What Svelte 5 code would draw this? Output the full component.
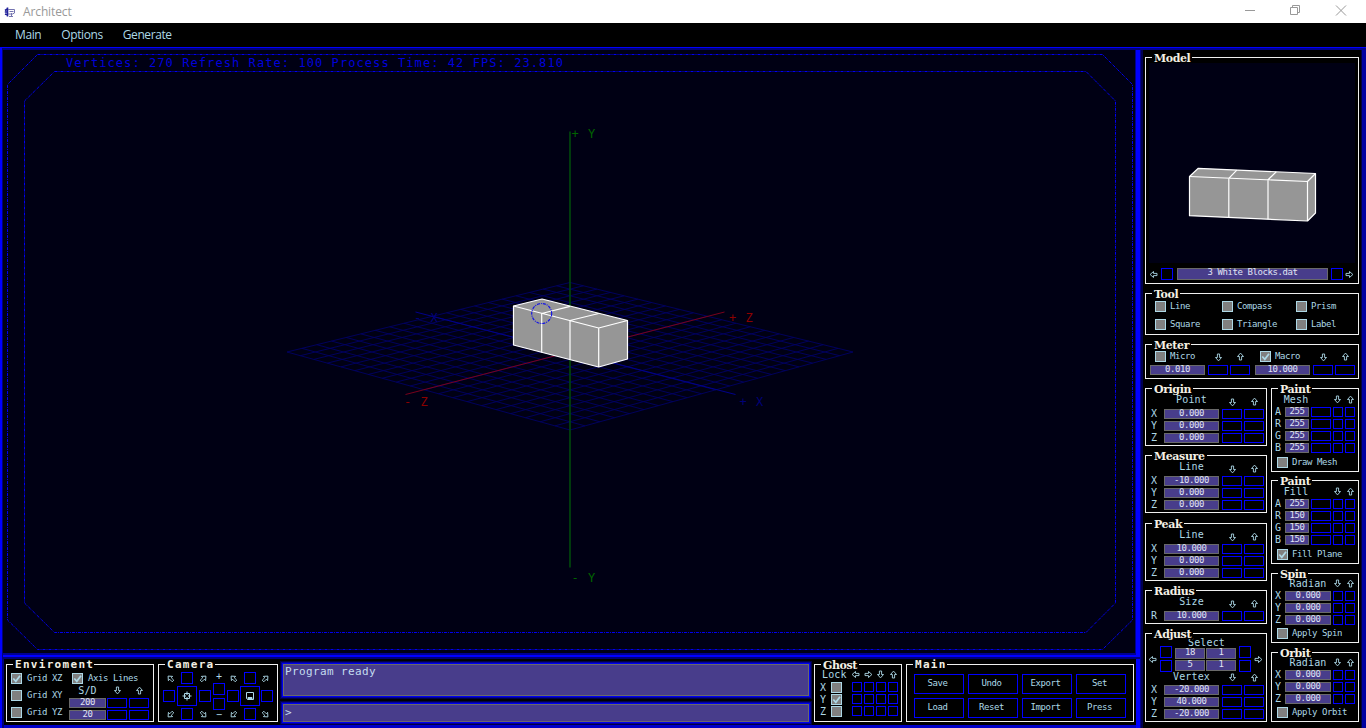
<script>
  // Perspective projection of the ground plane; a and b run from -1 to 1.
  function project(a, b) {
    const s = (a + b) / 2;
    const t = (a - b) / 2;
    const w = 1 - 0.0576 * s;
    return [570 + (283 * t) / w, 352 + (73.5 * s) / w];
  }
  const gridLines = [];
  for (let i = 0; i <= 20; i++) {
    const v = -1 + i / 10;
    gridLines.push([...project(v, -1), ...project(v, 1)]);
    gridLines.push([...project(-1, v), ...project(1, v)]);
  }

  const turns = { down: 0, left: 90, up: 180, right: 270, sw: 45, nw: 135, ne: 225, se: 315 };
  const tools = ['Line', 'Compass', 'Prism', 'Square', 'Triangle', 'Label'];
  const vectors = [
    { title: 'Origin', head: 'Point', rows: [['X', '0.000'], ['Y', '0.000'], ['Z', '0.000']] },
    { title: 'Measure', head: 'Line', rows: [['X', '-10.000'], ['Y', '0.000'], ['Z', '0.000']] },
    { title: 'Peak', head: 'Line', rows: [['X', '10.000'], ['Y', '0.000'], ['Z', '0.000']] },
    { title: 'Radius', head: 'Size', rows: [['R', '10.000']] }
  ];
  const vertex = [['X', '-20.000'], ['Y', '40.000'], ['Z', '-20.000']];
  const paints = [
    { title: 'Paint', head: 'Mesh', check: 'Draw Mesh', on: false, rows: [['A', '255'], ['R', '255'], ['G', '255'], ['B', '255']] },
    { title: 'Paint', head: 'Fill', check: 'Fill Plane', on: true, rows: [['A', '255'], ['R', '150'], ['G', '150'], ['B', '150']] }
  ];
  const turnsets = [
    { title: 'Spin', check: 'Apply Spin' },
    { title: 'Orbit', check: 'Apply Orbit' }
  ];
  const actions = ['Save', 'Undo', 'Export', 'Set', 'Load', 'Reset', 'Import', 'Press'];
</script>

{#snippet arrow(dir)}
  <svg class="arrow {dir}" viewBox="0 0 9 9"><path d="M3.400 1h2.200v3.500h1.900L4.500 7.900 1.500 4.500h1.900z" transform="rotate({turns[dir]} 4.500 4.500)" /></svg>
{/snippet}

{#snippet box(on)}
  <span class="check">{#if on}<svg viewBox="0 0 11 11"><path d="M2.300 5.500l2.500 2.800 4.200-5.600" /></svg>{/if}</span>
{/snippet}

{#snippet choice(label, on)}
  <label class="choice">{@render box(on)}<span>{label}</span></label>
{/snippet}

{#snippet vectorRow(row)}
  <div class="row"><b>{row[0]}</b><i class="field">{row[1]}</i><i class="slot wide"></i><i class="slot wide"></i></div>
{/snippet}

{#snippet camera(icon)}
  <div class="pad">
    {@render arrow('nw')}<i class="slot sq"></i>{@render arrow('ne')}
    <i class="slot sq"></i>
    <i class="slot hub">
      {#if icon === 'target'}
        <svg viewBox="0 0 10 10"><path d="M2.500 2.500h5v5h-5zM5 .5v3.500M5 6v3.500M.5 5H4M6 5h3.500" /></svg>
      {:else}
        <svg viewBox="0 0 10 10"><path d="M1.500 1.500h7v7h-6l-1-1z" /><path d="M3 6.500h4v2H3z" fill="#add8e6" /></svg>
      {/if}
    </i>
    <i class="slot sq"></i>
    {@render arrow('sw')}<i class="slot sq"></i>{@render arrow('se')}
  </div>
{/snippet}

<div class="app">
  <header class="titlebar">
    <svg class="logo" width="12" height="12" viewBox="0 0 12 12">
      <path d="M3.500 1.500v9M1 4.500l3-2M.8 6h3M1 8l3 1" stroke="#20209a" stroke-width="1.600" fill="none" />
      <path d="M4 3.500h6.500v3.500L8.500 8H4M5.500 5.500h4M5 10.500h4M7.500 7v3" stroke="#7474b0" fill="none" />
    </svg>
    <span class="name">Architect</span>
    <svg class="winbtns" width="110" height="22" viewBox="0 0 110 22">
      <path d="M5 10.500h10M50.500 7.500h7v7h-7zM52.500 7.500v-2h7v7h-2M96 5.500l10 10M106 5.500l-10 10" />
    </svg>
  </header>
  <nav><span>Main</span><span>Options</span><span>Generate</span></nav>

  <div class="body">
    <div class="left">
      <svg class="scene" viewBox="0 47 1140 610" width="1140" height="610">
        <g class="dash">
          <path d="M37.500 54.500H1102.500L1132.500 84.500V620L1102.500 649.500H37.500L7.500 620V84.500z" />
          <path d="M54.500 71.500H1086L1115.500 101V603L1086 632.500H54.500L24.500 603V101z" />
        </g>
        <g stroke="#000064" stroke-width="0.900">
          {#each gridLines as [x1, y1, x2, y2]}<line {x1} {y1} {x2} {y2} />{/each}
        </g>
        <path d="M415.500 312L735.500 394.500" stroke="#00008b" />
        <path d="M724.500 312L405.500 394.500" stroke="#78001c" />
        <path d="M570 131.500V567.500" stroke="#004a0c" stroke-width="1.600" />
        <g class="mono">
          <text x="66" y="67" fill="#0000dc" textLength="498">Vertices: 270 Refresh Rate: 100 Process Time: 42 FPS: 23.810</text>
          <text x="571.500" y="138" fill="#006400">+ Y</text>
          <text x="571.500" y="582" fill="#006400">- Y</text>
          <text x="729" y="322" fill="#8b0000">+ Z</text>
          <text x="404" y="406" fill="#8b0000">- Z</text>
          <text x="414" y="322" fill="#000078">- X</text>
          <text x="739.500" y="406" fill="#000078">+ X</text>
        </g>
        <g class="solid">
          <path d="M513.500 306L542 299 627.500 320.500V359L598.700 367 513.500 345z" />
          <path d="M513.500 306L598.700 328 627.500 320.500M598.700 328V367M541.700 313.500V352.500M570 320.500V359.500M541.700 313.500L570 306.300M570 320.500L598.700 313.500" />
        </g>
        <circle cx="541.700" cy="313.500" r="10" fill="none" stroke="#1414e6" stroke-width="1.200" stroke-dasharray="3 1 1 1" />
      </svg>

      <footer class="dock">
        <section class="group env">
          <h3 class="wideTitle">Enviroment</h3>
          <div class="stack">
            {@render choice('Grid XZ', true)}
            {@render choice('Grid XY', false)}
            {@render choice('Grid YZ', false)}
          </div>
          <div class="envRight">
            {@render choice('Axis Lines', true)}
            <div class="sdHead"><em>S/D</em>{@render arrow('down')}{@render arrow('up')}</div>
            <div class="row"><i class="field">200</i><i class="slot wide"></i><i class="slot wide"></i></div>
            <div class="row"><i class="field">20</i><i class="slot wide"></i><i class="slot wide"></i></div>
          </div>
        </section>

        <section class="group cam">
          <h3 class="wideTitle">Camera</h3>
          {@render camera('target')}
          <div class="zoomer"><em>+</em><i class="slot sq"></i><i class="slot sq"></i><em>−</em></div>
          {@render camera('disk')}
        </section>

        <div class="console">
          <div class="msg">Program ready</div>
          <div class="msg prompt">&gt;</div>
        </div>

        <section class="group ghost">
          <h3>Ghost</h3>
          <div class="ghostHead"><em>Lock</em>{@render arrow('left')}{@render arrow('right')}{@render arrow('down')}{@render arrow('up')}</div>
          {#each ['X', 'Y', 'Z'] as axis}
            <div class="ghostRow"><b>{axis}</b>{@render box(axis === 'Y')}<i class="slot sm"></i><i class="slot sm"></i><i class="slot sm"></i><i class="slot sm"></i></div>
          {/each}
        </section>

        <section class="group actions">
          <h3 class="wideTitle">Main</h3>
          {#each actions as a}<button>{a}</button>{/each}
        </section>
      </footer>
    </div>

    <aside>
      <section class="group model">
        <h3>Model</h3>
        <svg width="206" height="200" viewBox="1149 63 206 200">
          <g class="solid">
            <path d="M1189.500 176.500L1198.300 168.300 1315.500 173.500V213L1307.500 221 1189.500 215.700z" />
            <path d="M1189.500 176.500L1307.500 181.500 1315.500 173.500M1307.500 181.500V221M1228.800 178.300V217.500M1268 179.800V219.200M1228.800 178.300L1236.800 170.200M1268 179.800L1276.300 171.800" />
          </g>
        </svg>
        <div class="picker">{@render arrow('left')}<i class="slot sq"></i><i class="field">3 White Blocks.dat</i><i class="slot sq"></i>{@render arrow('right')}</div>
      </section>

      <section class="group tool">
        <h3>Tool</h3>
        {#each tools as t}{@render choice(t, false)}{/each}
      </section>

      <section class="group meter">
        <h3>Meter</h3>
        {#each [['Micro', '0.010', false], ['Macro', '10.000', true]] as [name, value, on]}
          <div>
            <div class="meterHead">{@render choice(name, on)}{@render arrow('down')}{@render arrow('up')}</div>
            <div class="row"><i class="field">{value}</i><i class="slot wide"></i><i class="slot wide"></i></div>
          </div>
        {/each}
      </section>

      <div class="cols">
        <div class="col first">
          {#each vectors as g}
            <section class="group vec">
              <h3>{g.title}</h3>
              <div class="head"><em>{g.head}</em>{@render arrow('down')}{@render arrow('up')}</div>
              {#each g.rows as r}{@render vectorRow(r)}{/each}
            </section>
          {/each}
          <section class="group vec adjust">
            <h3>Adjust</h3>
            <em class="sel">Select</em>
            <div class="selector">
              {@render arrow('left')}
              <div class="pair"><i class="slot sq"></i><i class="slot sq"></i></div>
              <div class="quad"><i class="field">18</i><i class="field">1</i><i class="field">5</i><i class="field">1</i></div>
              <div class="pair"><i class="slot sq"></i><i class="slot sq"></i></div>
              {@render arrow('right')}
            </div>
            <div class="head"><em>Vertex</em>{@render arrow('down')}{@render arrow('up')}</div>
            {#each vertex as r}{@render vectorRow(r)}{/each}
          </section>
        </div>

        <div class="col second">
          {#each paints as g}
            <section class="group paint">
              <h3>{g.title}</h3>
              <div class="head"><em>{g.head}</em>{@render arrow('down')}{@render arrow('up')}</div>
              {#each g.rows as r}
                <div class="row"><b>{r[0]}</b><i class="field">{r[1]}</i><i class="slot wide"></i><i class="slot sm"></i><i class="slot sm"></i></div>
              {/each}
              {@render choice(g.check, g.on)}
            </section>
          {/each}
          {#each turnsets as g}
            <section class="group paint spin">
              <h3>{g.title}</h3>
              <div class="head"><em>Radian</em>{@render arrow('down')}{@render arrow('up')}</div>
              {#each ['X', 'Y', 'Z'] as axis}
                <div class="row"><b>{axis}</b><i class="field">0.000</i><i class="slot sm"></i><i class="slot sm"></i></div>
              {/each}
              {@render choice(g.check, false)}
            </section>
          {/each}
        </div>
      </div>
    </aside>
  </div>
</div>

<style>
  :global(body) { background: #000; overflow: hidden; }
  .app { width: 1366px; height: 728px; background: #000; color: #add8e6; font: 9px/10px "DejaVu Sans Mono", monospace; letter-spacing: -0.42px; display: flex; flex-direction: column; }
  .app * { box-sizing: border-box; }
  i, em { font-style: normal; }
  b { font-weight: normal; }

  .titlebar { height: 23px; background: #fff; display: flex; align-items: center; padding-left: 4px; font: 12px/22px "Open Sans", sans-serif; letter-spacing: -0.12px; color: #999; }
  .name { margin-left: 7px; }
  .winbtns { margin-left: auto; margin-right: 16px; margin-bottom: 1px; fill: none; stroke: #999; }
  nav { height: 24px; display: flex; padding-left: 15px; gap: 20px; font: 12px/24px "Open Sans", sans-serif; letter-spacing: -0.400px; }

  .body { flex: 1; display: flex; }
  .left { width: 1140px; display: flex; flex-direction: column; }
  .scene { display: block; background: #000014; box-shadow: inset 2px 1px #00f, inset 3px 3px #000078, inset -4px -2px #00f, inset -5px -4px #000090; }
  .dash path { fill: none; stroke: #0000f0; stroke-dasharray: 3 1 1 1; }
  .mono { font: 12px "DejaVu Sans Mono", monospace; letter-spacing: 1.080px; white-space: pre; }
  .solid path { fill: #969696; stroke: #fff; stroke-width: 1.200; stroke-linejoin: round; }
  .solid path + path { fill: none; }

  .dock { height: 71px; padding: 7px 6px 6px; display: flex; gap: 4px; box-shadow: inset 2px 0 #00f, inset 4px 2px #000078, inset -4px 0 #00f, inset 0 -3px #0000c8; }
  aside { width: 226px; padding: 10px 7px 6px 5px; display: flex; flex-direction: column; box-shadow: inset 0 1px #00f, inset 1px 3px #000090, inset 3px 0 #000050, inset -4px -3px #0000a0, inset -5px 0 #000040; }

  .group { position: relative; border: 1px solid #f0f0f0; flex: none; }
  h3 { position: absolute; left: 6px; top: -5px; margin: 0; padding: 0 2px; height: 10px; background: #000; color: #f4f0e4; font: bold 11px/11px "DejaVu Serif", serif; letter-spacing: -0.400px; }
  h3.wideTitle { font: bold 11px/9px "DejaVu Sans Mono", monospace; letter-spacing: 1.300px; height: 9px; top: -5px; padding: 0 0 0 2px; }

  .arrow { width: 9px; height: 9px; flex: none; fill: none; stroke: #add8e6; stroke-width: 0.900; display: block; }
  .check { width: 11px; height: 11px; flex: none; background: #808080; border: 1px solid #add8e6; display: block; }
  .check svg { display: block; width: 11px; height: 11px; margin: -1px; fill: none; stroke: #add8e6; stroke-width: 1.700; }
  .choice { display: flex; height: 11px; gap: 4px; line-height: 10px; white-space: nowrap; }
  .field { display: block; flex: none; height: 10px; background: #483d8b; border: 1px solid #696969; color: #e0e4f4; text-align: center; line-height: 7px; }
  .slot { display: block; flex: none; border: 1px solid #00f; height: 10px; }
  .wide { width: 20px; }
  .sm { width: 10px; }
  .sq { width: 12px; height: 12px; }
  .row { display: flex; height: 10px; }
  .row .slot + .slot { margin-left: 2px; }
  b, em { font-size: 10px; letter-spacing: 0.150px; }

  .model { height: 227px; padding: 5px 3px 0; }
  .model > svg { display: block; background: #000014; }
  .picker { display: flex; margin-top: 5px; height: 12px; align-items: center; }
  .picker .field { width: 151px; height: 12px; margin: 0 3px 0 4px; }
  .picker .slot:first-of-type { margin-left: 3px; }
  .picker .arrow:last-child { margin-left: 2px; }
  .tool { margin-top: 9px; height: 42px; padding: 7px 0 0 9px; display: grid; grid-template-columns: 67px 74px 60px; grid-auto-rows: 18px; }
  .meter { margin-top: 9px; height: 35px; padding: 6px 0 0 4px; display: flex; gap: 5px; }
  .meter .row { margin-top: 3px; }
  .meter .field { width: 55px; margin-right: 3px; }
  .meterHead { display: flex; padding-left: 5px; height: 11px; }
  .meterHead .choice { width: 59px; }
  .meterHead .arrow { margin: 2px 13px 0 0; }
  .meterHead .arrow.up { margin: 1px 0 0; }

  .cols { margin-top: 9px; display: flex; gap: 4px; }
  .col { display: flex; flex-direction: column; }
  .first { width: 122px; }
  .second { width: 88px; }
  .vec { padding: 6px 0 2px 1px; margin-bottom: 9px; height: 58px; }
  .vec:nth-child(2) { margin-bottom: 10px; }
  .vec:nth-child(4) { height: 34px; }
  .vec .head { display: flex; height: 14px; }
  .vec .head em { width: 55px; margin-left: 17px; text-align: center; line-height: 10px; }
  .vec .head .arrow { margin: 3px 0 0 9px; }
  .vec .head .arrow + .arrow { margin: 2px 0 0 13px; }
  .vec .row + .row { margin-top: 2px; }
  .vec .row b { width: 17px; padding-left: 4px; line-height: 10px; }
  .vec .row .field { width: 55px; margin-right: 3px; }
  .vec.adjust { height: 89px; margin: 0; padding-top: 4px; }
  .sel { display: block; height: 8px; text-align: center; line-height: 10px; }
  .selector { display: flex; height: 26px; align-items: center; }
  .selector .arrow { margin: 0 3px 0 1px; }
  .selector .arrow:last-child { margin: 0 0 0 3px; }
  .pair { display: grid; gap: 2px; }
  .quad { display: grid; grid-template-columns: 30px 30px; gap: 1px; margin: 0 3px; }
  .quad .field { height: 11px; }
  .adjust .head { height: 13px; }
  .adjust .head em { line-height: 10px; }
  .adjust .head .arrow, .adjust .head .arrow + .arrow { margin-top: 1px; }

  .paint { height: 84px; padding-top: 5px; margin-bottom: 8px; }
  .paint:nth-child(2) { margin-bottom: 9px; }
  .paint .head { display: flex; height: 13px; }
  .paint .head em { width: 48px; text-align: center; line-height: 11px; }
  .paint .head .arrow { margin: 1px 0 0 13px; }
  .paint .head .arrow + .arrow { margin-left: 4px; }
  .paint .row { margin-bottom: 2px; }
  .paint .row b { width: 13px; padding-left: 3px; line-height: 10px; }
  .paint .row .field { width: 24px; margin-right: 2px; }
  .paint .choice { margin: 4px 0 0 5px; }
  .spin { height: 70px; padding-top: 4px; margin-bottom: 9px; }
  .spin .head em { width: 61px; padding-left: 11px; }
  .spin .head .arrow:first-of-type { margin-left: 0; }
  .spin .row .field { width: 46px; }
  .spin .choice { margin-top: 3px; }

  .env { width: 148px; display: flex; padding: 8px 0 0 4px; }
  .env .choice { gap: 5px; }
  .stack { width: 58px; display: grid; grid-auto-rows: 17px; }
  .envRight .choice { margin-left: 3px; }
  .envRight .row { margin-top: 2px; }
  .envRight .field { width: 37px; margin-right: 1px; }
  .sdHead { display: flex; height: 12px; }
  .sdHead em { width: 37px; text-align: center; line-height: 13px; }
  .sdHead .arrow { margin: 2px 0 0 7px; }
  .sdHead .arrow + .arrow { margin-left: 13px; }

  .cam { width: 120px; padding: 7px 0 0 4px; display: flex; gap: 2px; }
  .pad { display: grid; grid-template: 12px 20px 12px / 12px 20px 12px; gap: 2px; place-items: center; height: 48px; }
  .pad:last-child { column-gap: 1px; }
  .pad .ne, .pad .se { justify-self: start; }
  .pad:not(:last-child) .nw, .pad:not(:last-child) .sw { justify-self: end; }
  .hub { width: 20px; height: 20px; display: grid; place-items: center; }
  .hub svg { width: 10px; height: 10px; fill: none; stroke: #add8e6; }
  .zoomer { width: 12px; display: grid; grid-template-rows: 11px 15px 12px 10px; text-align: center; }
  .zoomer em { line-height: 10px; }

  .console { width: 528px; margin: -1px 0; padding: 1px 0; display: flex; flex-direction: column; gap: 8px; }
  .msg { height: 32px; margin-left: 1px; margin-right: 1px; border: 1px solid #696969; background: #483d8b; box-shadow: 0 0 0 1px #0000f0, 0 0 0 2px #000096, 0 0 0 3px #000046; padding: 1px 1px; color: #c4dcf0; font-size: 11px; line-height: 11px; letter-spacing: 0.380px; }
  .prompt { height: 18px; padding-top: 2px; }

  .ghost { width: 88px; padding: 5px 0 0 5px; margin-left: 0; }
  .ghostHead { display: flex; height: 12px; }
  .ghostHead em { width: 26px; margin-left: 2px; margin-right: 3px; line-height: 10px; }
  .ghostHead .arrow { margin: 0 3.500px 0 0; }
  .ghostRow { display: flex; height: 12px; }
  .ghostRow b { width: 11px; line-height: 11px; }
  .ghostRow .check { margin-right: 10px; }
  .ghostRow .slot + .slot { margin-left: 2px; }

  .actions { width: 228px; padding: 9px 0 0 7px; display: grid; grid-template-columns: repeat(4, 50px); grid-auto-rows: 20px; gap: 4px; align-content: start; }
  .actions button { border: 1px solid #00f; background: #000; color: #add8e6; font: inherit; letter-spacing: inherit; padding: 0 3px 2px 0; }
</style>
